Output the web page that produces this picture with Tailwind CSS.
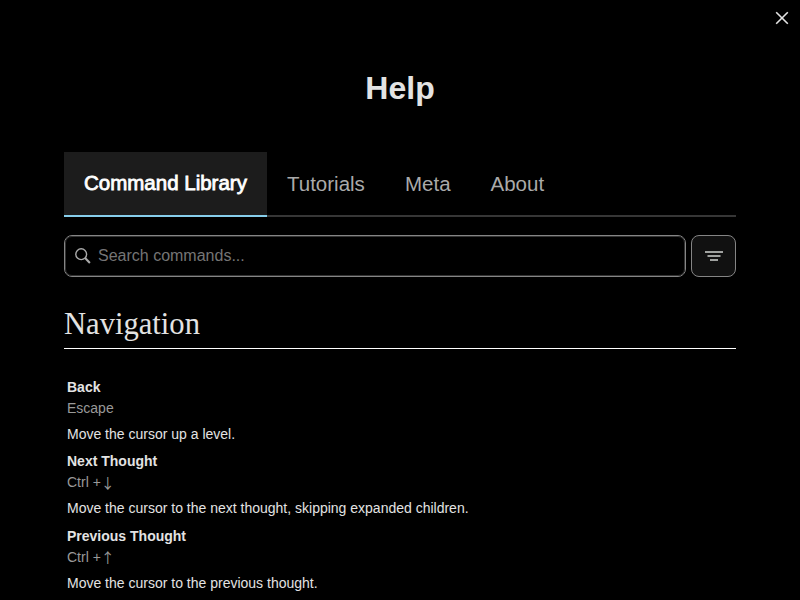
<!DOCTYPE html>
<html lang="en">
<head>
<meta charset="utf-8">
<title>Help</title>
<script src="https://cdn.jsdelivr.net/npm/@tailwindcss/browser@4"></script>
</head>
<body class="h-screen overflow-hidden bg-black text-[#e3e3e3] font-[Helvetica,'Liberation_Sans',Arial,sans-serif]">
<button class="absolute top-[11px] right-[11px]" aria-label="Close">
<svg class="block" width="14" height="14" viewBox="0 0 14 14" fill="none" stroke="#e3e3e3" stroke-width="1.6"><path d="M1.2 1.2 12.8 12.8M12.8 1.2 1.2 12.8"/></svg>
</button>
<main class="px-16 pt-[68px]">
<h1 class="text-center text-[32px] leading-10 font-bold">Help</h1>
<nav class="mt-11 flex h-[65px] border-b-2 border-[#363636] text-[20.5px] leading-[61px] text-[#aaa] whitespace-nowrap">
<a class="h-[65px] w-[203px] shrink-0 border-b-2 border-[#87ceeb] bg-[#1c1c1c] pl-5 text-white [-webkit-text-stroke:0.8px_white]">Command Library</a>
<a class="w-[118px] pl-5 pt-px">Tutorials</a>
<a class="w-[85.5px] pl-5 pt-px">Meta</a>
<a class="pl-5 pt-px">About</a>
</nav>
<div class="mt-[18px] flex gap-[5px]">
<div class="h-[42px] w-[622px] rounded-lg border border-[#858585] text-base text-[#757575]">
<div class="flex h-full items-center rounded-[7px] border border-[#333] pl-[9px]">
<svg class="mr-[6px] shrink-0" width="17" height="17" viewBox="0 0 17 17" fill="none" stroke="#aaa"><circle cx="6.2" cy="6.2" r="5.4" stroke-width="1.4"/><path d="m10.1 10.1 4.8 4.9" stroke-width="2.1"/></svg>
<span>Search commands...</span>
</div>
</div>
<button class="flex h-[42px] w-[45px] items-center justify-center rounded-lg border border-[#858585] bg-[#111]" aria-label="Sort">
<svg width="18" height="10" viewBox="0 0 18 10" fill="none" stroke="#d0d2cf" stroke-width="1.65"><path d="M0 1h18M2.5 5h13M5 9h8"/></svg>
</button>
</div>
<h2 class="mt-7 h-11 border-b border-white font-[Times,'Liberation_Serif','Times_New_Roman',serif] text-[30.6px] leading-[38px]">Navigation</h2>
<div class="ml-[3px] mt-[27.6px] text-sm leading-[21px]">
<section class="h-[74.5px]"><h3 class="font-bold">Back</h3><p class="text-[#999]">Escape</p><p class="mt-[5px]">Move the cursor up a level.</p></section>
<section class="h-[74.5px]"><h3 class="font-bold">Next Thought</h3><p class="h-[21px] text-[#999]">Ctrl +<span class="relative top-px leading-none font-['Noto_Sans_CJK_JP',sans-serif]">↓</span></p><p class="mt-[5px]">Move the cursor to the next thought, skipping expanded children.</p></section>
<section class="h-[74.5px]"><h3 class="font-bold">Previous Thought</h3><p class="h-[21px] text-[#999]">Ctrl +<span class="relative top-px leading-none font-['Noto_Sans_CJK_JP',sans-serif]">↑</span></p><p class="mt-[5px]">Move the cursor to the previous thought.</p></section>
</div>
</main>
</body>
</html>
